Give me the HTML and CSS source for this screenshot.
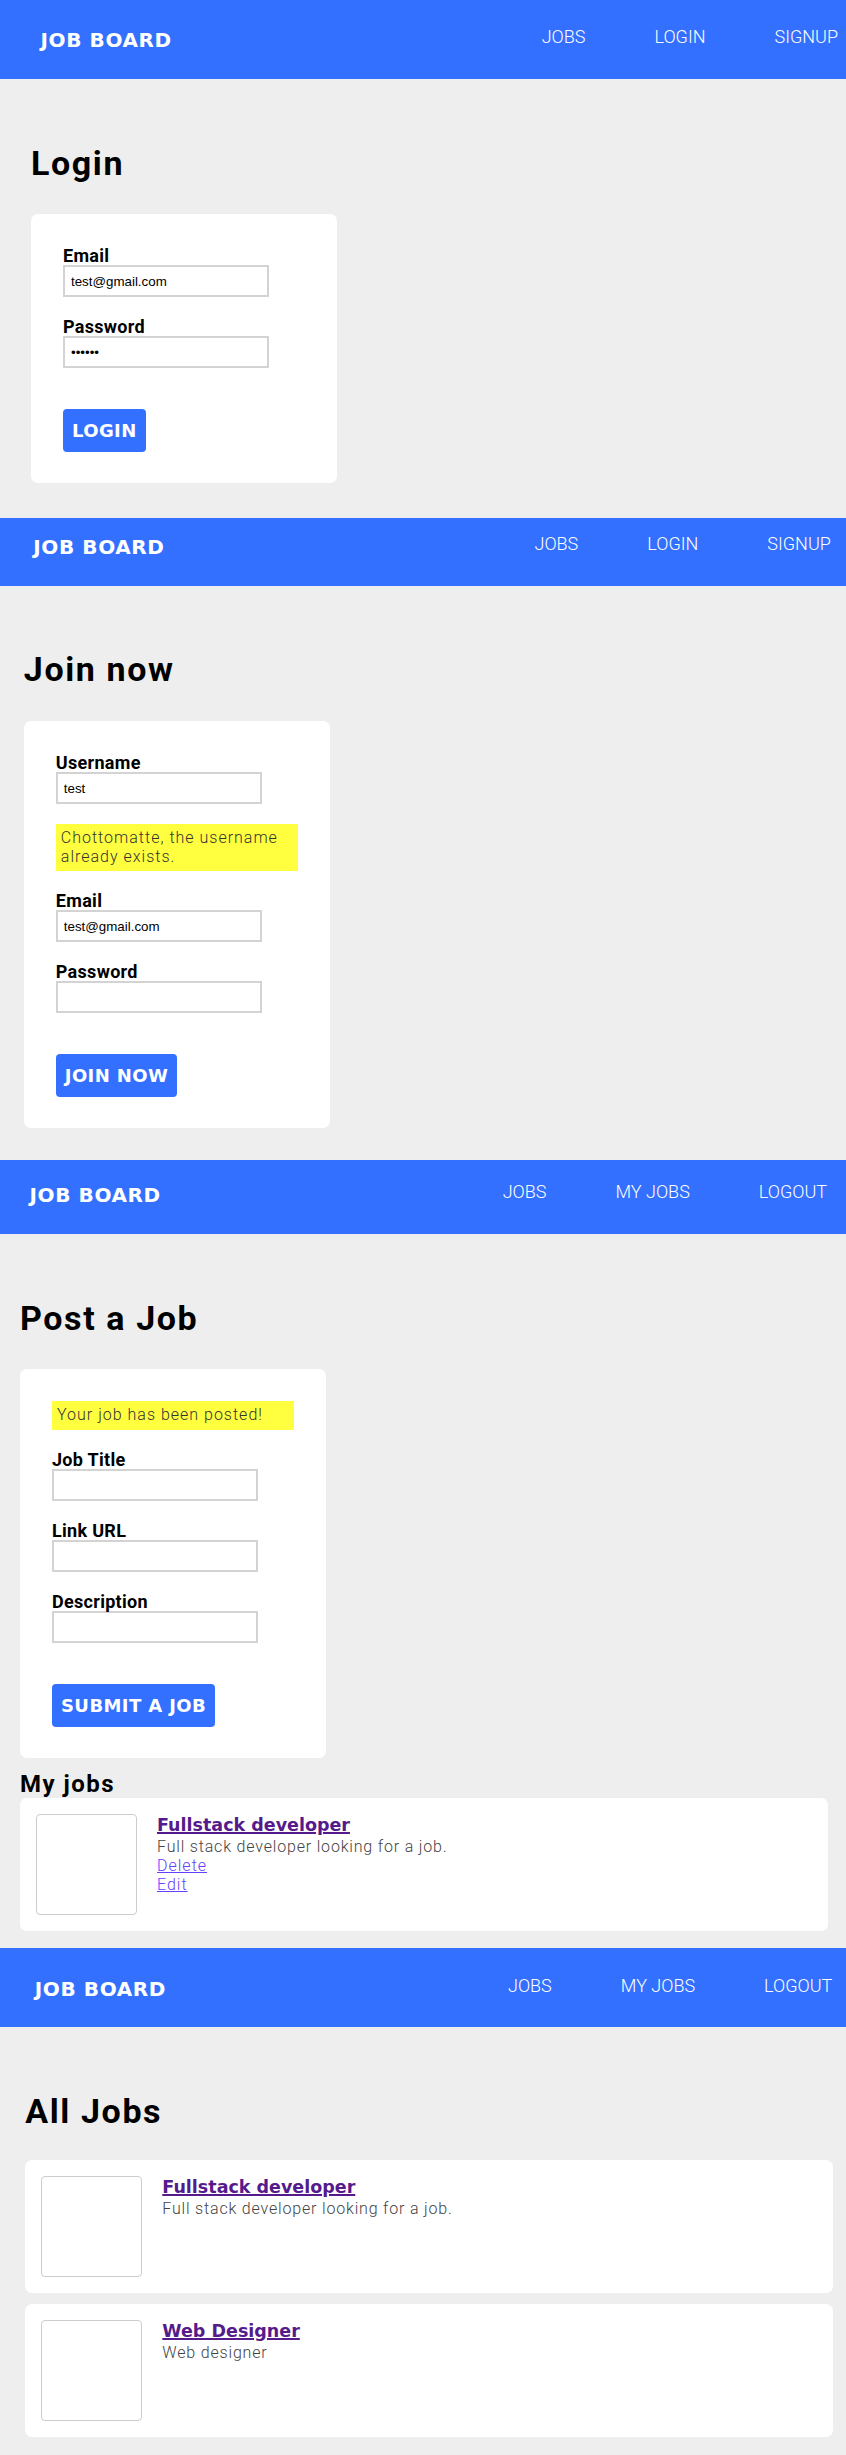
FILE: index.html
```html
<!DOCTYPE html>
<html lang="en">
<head>
<meta charset="utf-8">
<title>Job Board</title>
<link rel="stylesheet" href="styles.css">
</head>
<body>

<div class="screen s1">
  <header class="nav">
    <a class="logo" href="#">JOB BOARD</a>
    <nav class="links"><a href="#">JOBS</a><a href="#">LOGIN</a><a href="#">SIGNUP</a></nav>
  </header>
  <main class="main">
    <h1 class="title">Login</h1>
    <form class="form-card">
      <div class="field"><label>Email</label><input type="text" value="test@gmail.com"></div>
      <div class="field"><label>Password</label><input type="password" value="123456"></div>
      <button class="btn" type="button">LOGIN</button>
    </form>
  </main>
</div>

<div class="screen s2">
  <header class="nav">
    <a class="logo" href="#">JOB BOARD</a>
    <nav class="links"><a href="#">JOBS</a><a href="#">LOGIN</a><a href="#">SIGNUP</a></nav>
  </header>
  <main class="main">
    <h1 class="title">Join now</h1>
    <form class="form-card">
      <div class="field"><label>Username</label><input type="text" value="test"></div>
      <div class="msg">Chottomatte, the username already exists.</div>
      <div class="field"><label>Email</label><input type="text" value="test@gmail.com"></div>
      <div class="field"><label>Password</label><input type="password" value=""></div>
      <button class="btn" type="button">JOIN NOW</button>
    </form>
  </main>
</div>

<div class="screen s3">
  <header class="nav">
    <a class="logo" href="#">JOB BOARD</a>
    <nav class="links"><a href="#">JOBS</a><a href="#">MY JOBS</a><a href="#">LOGOUT</a></nav>
  </header>
  <main class="main">
    <h1 class="title">Post a Job</h1>
    <form class="form-card">
      <div class="msg">Your job has been posted!</div>
      <div class="field"><label>Job Title</label><input type="text" value=""></div>
      <div class="field"><label>Link URL</label><input type="text" value=""></div>
      <div class="field"><label>Description</label><input type="text" value=""></div>
      <button class="btn" type="button">SUBMIT A JOB</button>
    </form>
    <h2 class="subtitle">My jobs</h2>
    <div class="job-list">
      <div class="job">
        <div class="thumb"></div>
        <div class="job-body">
          <a class="job-title" href="#">Fullstack developer</a>
          <p class="job-desc">Full stack developer looking for a job.</p>
          <a class="job-link" href="#">Delete</a>
          <a class="job-link" href="#">Edit</a>
        </div>
      </div>
    </div>
  </main>
</div>

<div class="screen s4">
  <header class="nav">
    <a class="logo" href="#">JOB BOARD</a>
    <nav class="links"><a href="#">JOBS</a><a href="#">MY JOBS</a><a href="#">LOGOUT</a></nav>
  </header>
  <main class="main">
    <h1 class="title">All Jobs</h1>
    <div class="job-list">
      <div class="job">
        <div class="thumb"></div>
        <div class="job-body">
          <a class="job-title" href="#">Fullstack developer</a>
          <p class="job-desc">Full stack developer looking for a job.</p>
        </div>
      </div>
      <div class="job">
        <div class="thumb"></div>
        <div class="job-body">
          <a class="job-title" href="#">Web Designer</a>
          <p class="job-desc">Web designer</p>
        </div>
      </div>
    </div>
  </main>
</div>

</body>
</html>
```

FILE: styles.css
```css
html, body {
  margin: 0;
  padding: 0;
}

body {
  background: #eeeeee;
  overflow-x: hidden;
  font-family: Roboto, "Liberation Sans", Arial, sans-serif;
  color: #000;
}

/* each stacked screen is the same 870px-wide page, cropped differently */
.screen {
  width: 870px;
  margin-left: calc(-1 * var(--shift));
  background: #eeeeee;
}

.s1 { --shift: 0px;   --crop: 0px;  padding-bottom: 35px; }
.s2 { --shift: 7.2px; --crop: 11px; padding-bottom: 31.6px; }
.s3 { --shift: 11px;  --crop: 5px;  padding-bottom: 17.2px; }
.s4 { --shift: 5.7px; --crop: 0px;  padding-bottom: 17.5px; }

/* ---------- navigation ---------- */
.nav {
  box-sizing: border-box;
  height: calc(79px - var(--crop));
  padding: calc(25.35px - var(--crop)) 32px 0 40.5px;
  background: #3370ff;
  display: flex;
  justify-content: space-between;
  align-items: flex-start;
}

.logo {
  margin-top: 3px;
  font-family: "DejaVu Sans", "Liberation Sans", sans-serif;
  font-weight: 700;
  font-size: 20px;
  line-height: 24px;
  letter-spacing: 0.6px;
  color: #fff;
  text-decoration: none;
}

.links {
  display: flex;
  gap: 69px;
}

.links a {
  font-family: Roboto, "Liberation Sans", sans-serif;
  font-weight: 300;
  font-size: 18px;
  line-height: 24px;
  color: #fff;
  text-decoration: none;
}

/* ---------- page body ---------- */
.main {
  padding: 64px 31px 0;
}

.s2 .main { padding-top: 63px; }

.title {
  margin: 0 0 31px;
  font-family: Roboto, "Liberation Sans", sans-serif;
  font-weight: 700;
  font-size: 34px;
  line-height: 40px;
  letter-spacing: 1.6px;
  color: #000;
}

.s2 .title { margin-bottom: 32px; }
.s4 .title { margin-bottom: 28.6px; }

/* ---------- forms ---------- */
.form-card {
  box-sizing: border-box;
  width: 306px;
  margin: 0;
  padding: 32px 32px 31px;
  background: #fff;
  border-radius: 7px;
  display: flex;
  flex-direction: column;
  align-items: stretch;
}

.field {
  margin-bottom: 20px;
}

.field label {
  display: block;
  font-family: Roboto, "Liberation Sans", sans-serif;
  font-weight: 700;
  font-size: 18px;
  line-height: 19px;
  letter-spacing: 0.3px;
  color: #000;
}

.field input {
  display: block;
  box-sizing: border-box;
  width: 206px;
  height: 32px;
  margin: 0;
  padding: 0 6px;
  border: 2px solid #d3d3d3;
  border-radius: 0;
  background: #fff;
  font-family: "Liberation Sans", Arial, sans-serif;
  font-size: 13.33px;
  color: #000;
  outline: none;
}

.msg {
  margin-bottom: 20px;
  padding: 5px;
  background: #ffff40;
  color: #333;
  font-family: Roboto, "Liberation Sans", sans-serif;
  font-weight: 300;
  font-size: 16px;
  line-height: 18.7px;
  letter-spacing: 1px;
}

.btn {
  align-self: flex-start;
  margin: 21px 0 0;
  padding: 10px 9px;
  border: 0;
  border-radius: 4px;
  background: #3370ff;
  color: #fff;
  font-family: "DejaVu Sans", "Liberation Sans", sans-serif;
  font-weight: 700;
  font-size: 18px;
  line-height: 23px;
  letter-spacing: 0.4px;
  cursor: pointer;
}

/* ---------- job lists ---------- */
.subtitle {
  margin: 12px 0 0;
  font-family: Roboto, "Liberation Sans", sans-serif;
  font-weight: 700;
  font-size: 24px;
  line-height: 28px;
  letter-spacing: 1.5px;
  color: #000;
}

.job-list {
  display: flex;
  flex-direction: column;
  gap: 10.5px;
}

.job {
  display: flex;
  align-items: flex-start;
  gap: 20px;
  padding: 16px 16px 16.5px;
  background: #fff;
  border-radius: 7px;
}

.thumb {
  flex: none;
  box-sizing: border-box;
  width: 101px;
  height: 101px;
  border: 1px solid #cccccc;
  border-radius: 4px;
  background: #fff;
}

.job-body {
  display: flex;
  flex-direction: column;
  align-items: flex-start;
  min-width: 0;
}

.job-title {
  font-family: "DejaVu Sans", "Liberation Sans", sans-serif;
  font-weight: 700;
  font-size: 17.5px;
  line-height: 23px;
  color: #551a8b;
  text-decoration: underline;
  text-decoration-thickness: 1.5px;
}

.job-desc {
  margin: 0;
  font-family: Roboto, "Liberation Sans", sans-serif;
  font-weight: 300;
  font-size: 16px;
  line-height: 19px;
  letter-spacing: 0.82px;
  color: #444;
}

.job-link {
  font-family: Roboto, "Liberation Sans", sans-serif;
  font-weight: 300;
  font-size: 16px;
  line-height: 19px;
  letter-spacing: 1px;
  color: #6440ff;
  text-decoration: underline;
}
```
